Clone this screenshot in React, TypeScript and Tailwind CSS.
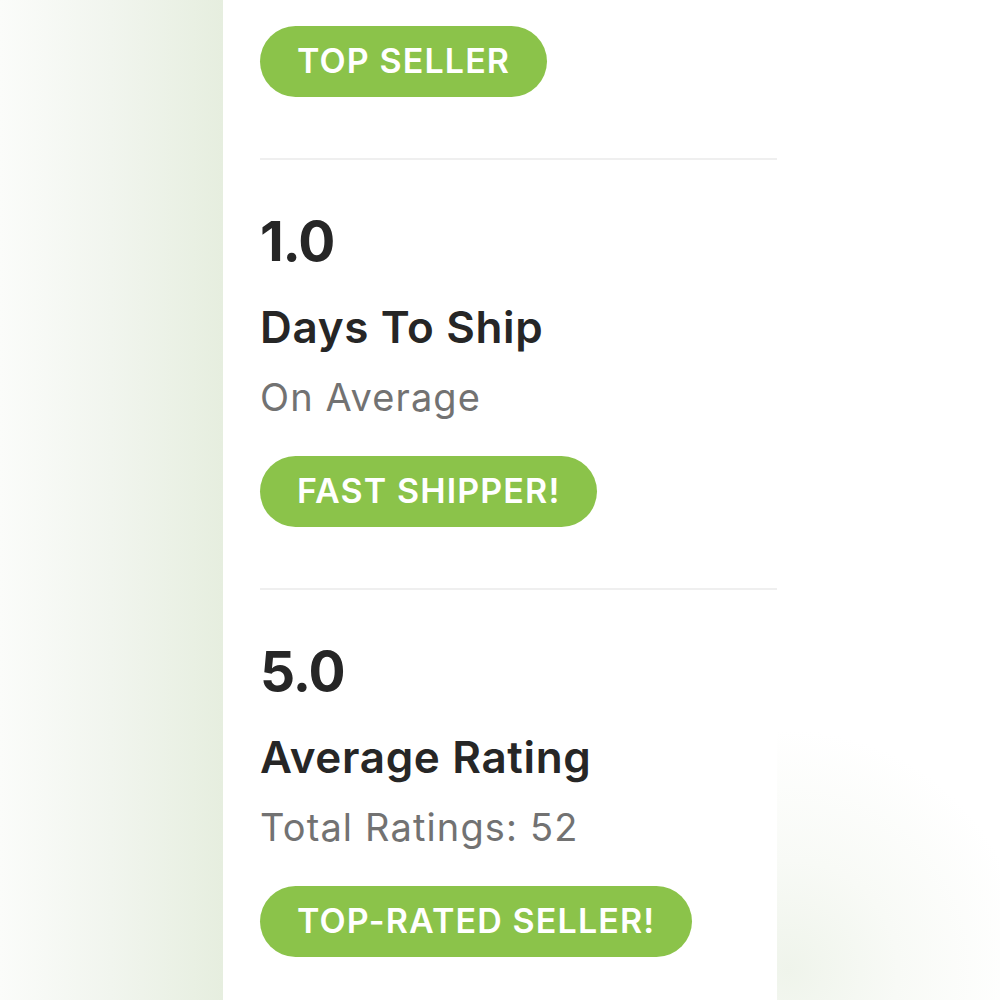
import React from "react";

const font = { fontFamily: "Inter, Lato, sans-serif" };

function Pill({ label }: { label: string }) {
  return (
    <div className="flex">
      <span className="flex h-[71px] items-center rounded-full bg-[#8bc34a] px-[37px] pb-[3px] text-[34px] font-semibold tracking-[0.033em] text-white">
        {label}
      </span>
    </div>
  );
}

function Stat({ value, title, sub, badge }: { value: string; title: string; sub: string; badge: string }) {
  return (
    <div className="flex flex-col">
      <div className="mt-[53px] text-[55px] font-bold leading-[56px] tracking-[-0.02em] text-[#262626]">{value}</div>
      <div className="mt-[36px] text-[44px] font-semibold leading-[45px] tracking-[0.015em] text-[#262626]">{title}</div>
      <div className="mt-[28px] text-[38px] leading-[39px] tracking-[0.03em] text-[#727272]">{sub}</div>
      <div className="mt-[39px]">
        <Pill label={badge} />
      </div>
    </div>
  );
}

export default function App() {
  return (
    <div className="flex h-[1000px] w-[1000px] overflow-hidden bg-white" style={font}>
      <div className="w-[223px] bg-[linear-gradient(to_right,#fbfcfa,#f1f5ee_50%,#e6eedf)]" />
      <div className="flex w-[554px] flex-col bg-white pl-[37px]">
        <div className="pt-[26px]">
          <Pill label="TOP SELLER" />
        </div>
        <div className="mt-[61px] h-[2px] bg-[#efefef]" />
        <Stat value="1.0" title="Days To Ship" sub="On Average" badge="FAST SHIPPER!" />
        <div className="mt-[61px] h-[2px] bg-[#efefef]" />
        <Stat value="5.0" title="Average Rating" sub="Total Ratings: 52" badge="TOP-RATED SELLER!" />
      </div>
      <div className="flex-1 bg-[radial-gradient(circle_at_5%_97%,#eff4eb_0px,#f8faf6_110px,#ffffff_240px)]" />
    </div>
  );
}
